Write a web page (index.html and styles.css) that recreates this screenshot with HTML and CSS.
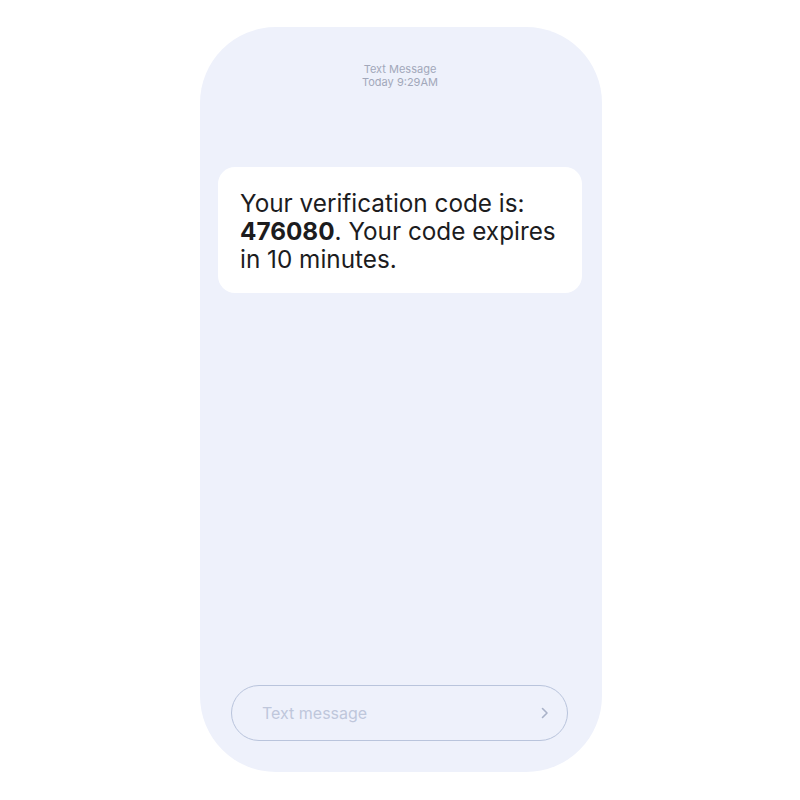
FILE: index.html
```html
<!DOCTYPE html>
<html>
<head>
<meta charset="utf-8">
<link rel="stylesheet" href="styles.css">
</head>
<body>
<div class="phone">
  <div class="header">
    <div>Text Message</div>
    <div>Today 9:29AM</div>
  </div>
  <div class="bubble">Your verification code is: <b>476080</b>. Your code expires in 10 minutes.</div>
  <div class="spacer"></div>
  <div class="input">
    <span class="placeholder">Text message</span>
    <svg class="chev" width="12" height="14" viewBox="0 0 12 14"><path d="M3.5 2.5 L8 7 L3.5 11.5" fill="none" stroke="#a9b2c8" stroke-width="1.6" stroke-linecap="round" stroke-linejoin="round"/></svg>
  </div>
</div>
</body>
</html>
```
FILE: styles.css
```css
html, body { margin: 0; padding: 0; background: #ffffff; }
body { width: 800px; height: 800px; font-family: Inter, "Noto Sans", sans-serif; }
.phone {
  margin: 27px 0 0 200px;
  width: 402px;
  height: 745px;
  box-sizing: border-box;
  background: #eef1fb;
  border-radius: 76px;
  display: flex;
  flex-direction: column;
  padding: 36px 20px 31px 18px;
}
.header {
  text-align: center;
  font-size: 11px;
  line-height: 13px;
  color: #a2a8ba;
}
.bubble {
  margin-top: 78px;
  background: #ffffff;
  border-radius: 17px;
  padding: 22px 20px 20px 22px;
  font-size: 24.3px;
  line-height: 28px;
  color: #1c1c1e;
}
.bubble b { font-weight: 700; }
.spacer { flex: 1; }
.input {
  margin: 0 14px 0 13px;
  height: 56px;
  box-sizing: border-box;
  border: 1.3px solid #b9c4dc;
  border-radius: 28px;
  display: flex;
  align-items: center;
  justify-content: space-between;
  padding: 0 16px 0 30px;
}
.placeholder { font-size: 16px; color: #bfc7db; }
.chev { display: block; }
```
